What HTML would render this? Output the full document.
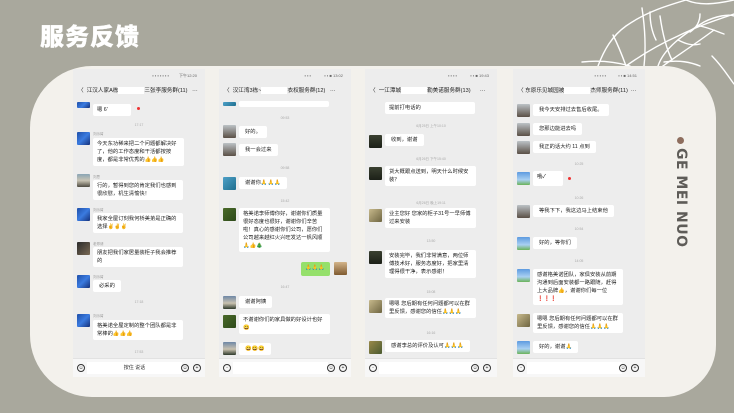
<!DOCTYPE html>
<html><head><meta charset="utf-8">
<style>
*{margin:0;padding:0;box-sizing:border-box}
body{width:734px;height:413px;overflow:hidden;background:#a9a89d;position:relative;font-family:"Liberation Sans","Noto Sans CJK SC",sans-serif}
.abs{position:absolute}
.card{position:absolute;left:30px;top:66px;width:686px;height:331px;background:#f3f1ec;border-radius:62px 52px 52px 62px}
.ph{position:absolute;top:69px;width:132px;height:308px;background:#ededed;overflow:hidden}
.sb{position:absolute;left:0;top:4px;width:100%;font-size:4px;color:#666;text-align:right;padding-right:8px}
.hd{position:absolute;left:0;top:17px;width:100%;font-size:5.6px;color:#222;padding-left:5px;white-space:nowrap}
.hd i{font-style:normal;display:inline-block;width:26px;height:7px;background:#fff;vertical-align:middle}
.bt{position:absolute;left:0;bottom:0;width:100%;height:19px;background:#f7f7f7;border-top:1px solid #e2e2e2}
.ic{position:absolute;top:5px;width:8px;height:8px;border:1px solid #333;border-radius:50%;font-size:5px;line-height:6px;text-align:center;color:#333}
.b{position:absolute;background:#fff;font-size:5.3px;line-height:8px;color:#222;padding:2px 4px;border-radius:2px}
.s{white-space:nowrap;width:auto!important;padding:2px 6px}
.g{background:#95e06b}
.a{position:absolute;width:13px;height:13px;border-radius:1px}
.t{position:absolute;left:0;width:100%;text-align:center;font-size:3.5px;color:#aaa}
.n{position:absolute;font-size:3.5px;color:#999}
.a1{background:linear-gradient(135deg,#1e4fa8,#3b7be0 50%,#15317a)}
.a2{background:linear-gradient(#8aa5b5,#c9c4b4 50%,#4d4a40)}
.a3{background:linear-gradient(135deg,#2b2b2b,#7a6a55)}
.a4{background:linear-gradient(135deg,#4a6a2a,#2d4a1a)}
.a5{background:linear-gradient(135deg,#4da0c8,#1f6f8f)}
.a6{background:linear-gradient(#bcc2c6,#5a5046)}
.a7{background:linear-gradient(#d3b48a,#7f5a2f)}
.a8{background:linear-gradient(#6e87a6,#c9c2b0 55%,#2f3a2c)}
.a9{background:linear-gradient(#5d9be0,#a9d0f2 60%,#6bb35a)}
.a10{background:linear-gradient(135deg,#c7b98c,#6e6541)}
.a11{background:linear-gradient(#3a4030,#1c2018)}
.a12{background:linear-gradient(135deg,#9a8a4a,#4a5a30)}
</style></head><body>

<div class="abs" style="left:40px;top:17px;font-size:24px;font-weight:900;color:#fff;letter-spacing:1px;font-family:'Noto Sans CJK SC',sans-serif;-webkit-text-stroke:0.3px #fff">服务反馈</div>

<svg class="abs" style="left:540px;top:0" width="194" height="110" viewBox="540 0 194 110" fill="none" stroke="#fff" stroke-width="1.4" stroke-linecap="round">
<path d="M598 66 C604 50 612 36 626 26 C646 12 666 6 686 0"/>
<path d="M626 66 C640 56 660 44 678 36 C698 26 716 20 734 14"/>
<path d="M658 66 C664 48 684 34 704 22 C716 16 728 14 734 16"/>
<path d="M655 72 C670 60 690 48 714 30"/>
<path d="M582 62 C600 60 616 62 630 66"/>
<path d="M613 35 C618 45 622 55 626 66"/>
<path d="M642 8 C645 28 646 48 644 66"/>
<path d="M650 12 C650 24 652 32 656 40"/>
<path d="M660 16 C662 30 666 48 672 60"/>
<path d="M664 62 C680 60 690 62 700 66"/>
<path d="M678 40 C686 44 692 46 700 44"/>
<path d="M690 32 C696 28 700 22 700 14"/>
<path d="M700 26 C710 28 718 32 724 34"/>
<path d="M712 56 C722 66 728 76 734 84"/>
<path d="M686 0 C700 6 716 4 734 0"/>
</svg>

<div class="card"></div>

<!-- Phone 1 -->
<div class="ph" style="left:73px">
<div class="sb">▪ ▪ ▪ ▪ ▪ ▪ ▪ &nbsp;&nbsp;&nbsp;&nbsp;&nbsp;&nbsp;&nbsp; 下午12:20</div>
<div class="hd">〈 &nbsp;江汉人家A栋<i></i>三张李服务群(11) &nbsp;&nbsp;···</div>
<div class="a a1" style="left:4px;top:33px;height:6px"></div>
<div class="b" style="left:20px;top:35px;width:38px">嗯 6'</div>
<div class="abs" style="left:64px;top:38px;width:3px;height:3px;border-radius:50%;background:#e33"></div>
<div class="t" style="top:54px">17:17</div>
<div class="a a1" style="left:4px;top:63px"></div><div class="n" style="left:20px;top:63px">刘示臂</div>
<div class="b" style="left:20px;top:69px;width:91px">今天东功稀来把二个问题都解决好了，他的工作态度和干活都按按度，都是非常优秀的👍👍👍</div>
<div class="a a2" style="left:4px;top:105px"></div><div class="n" style="left:20px;top:106px">刘思</div>
<div class="b" style="left:20px;top:111px;width:90px">行的，暂得到您的肯定我们也感到很欣慰，机生清愉快！</div>
<div class="a a1" style="left:4px;top:139px"></div><div class="n" style="left:20px;top:139px">刘示臂</div>
<div class="b" style="left:20px;top:144px;width:90px">我家全屋订刻我何桥美弟是正确的选择✌✌✌</div>
<div class="a a3" style="left:4px;top:173px"></div><div class="n" style="left:20px;top:173px">老郑请</div>
<div class="b" style="left:20px;top:178px;width:90px">朋友把我们家居量装柜子我会推荐的</div>
<div class="a a1" style="left:4px;top:206px"></div><div class="n" style="left:20px;top:206px">刘示臂</div>
<div class="b s" style="left:20px;top:211px">必采的</div>
<div class="t" style="top:231px">17:18</div>
<div class="a a1" style="left:4px;top:245px"></div><div class="n" style="left:20px;top:245px">刘示臂</div>
<div class="b" style="left:20px;top:251px;width:90px">格美诺全屋定制的整个团队都是非常棒的👍👍👍</div>
<div class="t" style="top:281px">17:53</div>
<div class="bt"><div class="ic" style="left:4px">☺</div><div class="abs" style="left:14px;top:3px;width:95px;height:12px;background:#fff;font-size:5px;line-height:12px;text-align:center;color:#333">按住 说话</div><div class="ic" style="left:108px">☺</div><div class="ic" style="left:120px">+</div></div>
</div>

<!-- Phone 2 -->
<div class="ph" style="left:219px">
<div class="sb">▪ ▪ ▪ &nbsp;&nbsp;&nbsp;&nbsp;&nbsp;&nbsp;&nbsp;&nbsp;&nbsp;&nbsp; ▪ ▪ ■ 13:02</div>
<div class="hd">〈 &nbsp;汉江湾3栋~<i></i>衣权服务群(12) &nbsp;&nbsp;···</div>
<div class="a a5" style="left:4px;top:33px;height:4px"></div>
<div class="b" style="left:20px;top:32px;width:90px;height:6px;padding:0"></div>
<div class="t" style="top:47px">09:53</div>
<div class="a a6" style="left:4px;top:56px"></div><div class="b s" style="left:20px;top:57px">好的。</div>
<div class="a a6" style="left:4px;top:74px"></div><div class="b s" style="left:20px;top:75px">我一会过来</div>
<div class="t" style="top:97px">09:58</div>
<div class="a a5" style="left:4px;top:108px"></div><div class="b s" style="left:20px;top:108px">谢谢你🙏🙏🙏</div>
<div class="t" style="top:130px">15:42</div>
<div class="a a4" style="left:4px;top:139px"></div>
<div class="b" style="left:20px;top:139px;width:91px">格美诺李师傅你好，谢谢你们质量很好态度也很好，谢谢你们辛苦啦！真心的感谢你们公司，愿你们公司越来越红火兴旺发达一帆风顺🙏👍🎄</div>
<div class="b g" style="left:82px;top:193px;width:29px;height:14px">🙏🙏🙏</div>
<div class="a a7" style="left:115px;top:193px"></div>
<div class="t" style="top:216px">16:47</div>
<div class="a a8" style="left:4px;top:227px"></div><div class="b s" style="left:20px;top:227px">谢谢阿姨</div>
<div class="a a4" style="left:4px;top:246px"></div><div class="b" style="left:20px;top:245px;width:91px">不谢谢你们的家具做的好设计也好😀</div>
<div class="a a8" style="left:4px;top:273px"></div><div class="b s" style="left:20px;top:274px">😀😀😀</div>
<div class="bt"><div class="ic" style="left:4px">◦</div><div class="abs" style="left:14px;top:3px;width:95px;height:12px;background:#fff"></div><div class="ic" style="left:108px">☺</div><div class="ic" style="left:120px">+</div></div>
</div>

<!-- Phone 3 -->
<div class="ph" style="left:365px">
<div class="sb">▪ ▪ ▪ ▪ &nbsp;&nbsp;&nbsp;&nbsp;&nbsp;&nbsp;&nbsp;&nbsp;&nbsp;&nbsp; ▪ ▪ ■ 19:43</div>
<div class="hd">〈 &nbsp;一江潭城<i></i>勒美诺服务群(13) &nbsp;&nbsp;&nbsp;&nbsp;&nbsp;···</div>
<div class="b" style="left:20px;top:33px;width:90px">提前打电话的</div>
<div class="t" style="top:55px">6月25日 上午10:10</div>
<div class="a a11" style="left:4px;top:66px"></div><div class="b s" style="left:20px;top:65px">收到，谢谢</div>
<div class="t" style="top:88px">6月26日 下午15:40</div>
<div class="a a11" style="left:4px;top:98px"></div><div class="b" style="left:20px;top:97px;width:91px">货大概跟点送到，明天什么时候安装？</div>
<div class="t" style="top:132px">6月26日 晚上19:11</div>
<div class="a a10" style="left:4px;top:140px"></div><div class="b" style="left:20px;top:139px;width:91px">业主您好 您家的柜子31号一早师傅过来安装</div>
<div class="t" style="top:170px">13:50</div>
<div class="a a11" style="left:4px;top:182px"></div><div class="b" style="left:20px;top:181px;width:91px">安装完毕，我们非常满意，两位师傅技术好，服务态度好，把家里清理得很干净，表示感谢！</div>
<div class="t" style="top:221px">15:08</div>
<div class="a a10" style="left:4px;top:231px"></div><div class="b" style="left:20px;top:229px;width:91px">嗯嗯 您后期有任何问题都可以在群里反馈，感谢您的信任🙏🙏🙏</div>
<div class="t" style="top:262px">16:16</div>
<div class="a a12" style="left:4px;top:272px"></div><div class="b s" style="left:20px;top:271px">感谢李总的评价及认可🙏🙏🙏</div>
<div class="bt"><div class="ic" style="left:4px">◦</div><div class="abs" style="left:14px;top:3px;width:95px;height:12px;background:#fff"></div><div class="ic" style="left:106px">☺</div><div class="ic" style="left:118px">+</div></div>
</div>

<!-- Phone 4 -->
<div class="ph" style="left:513px">
<div class="sb">▪ ▪ ▪ ▪ ▪ &nbsp;&nbsp;&nbsp;&nbsp;&nbsp;&nbsp;&nbsp;&nbsp;&nbsp; ▪ ▪ ■ 14:51</div>
<div class="hd">〈 东原乐见城园被<i></i>杰师服务群(11) &nbsp;···</div>
<div class="a a6" style="left:4px;top:35px"></div><div class="b s" style="left:20px;top:35px">我今天安排过去售后收尾。</div>
<div class="a a6" style="left:4px;top:54px"></div><div class="b s" style="left:20px;top:54px">您那边能进去吗</div>
<div class="a a6" style="left:4px;top:72px"></div><div class="b s" style="left:20px;top:72px">我正的话大约 11 点到</div>
<div class="t" style="top:93px">10:25</div>
<div class="a a9" style="left:4px;top:103px"></div><div class="b" style="left:20px;top:102px;width:30px;height:15px">哦✓</div>
<div class="abs" style="left:55px;top:108px;width:3px;height:3px;border-radius:50%;background:#e33"></div>
<div class="t" style="top:127px">10:26</div>
<div class="a a6" style="left:4px;top:136px"></div><div class="b s" style="left:20px;top:136px">等我下下，我这边马上结束他</div>
<div class="t" style="top:158px">10:54</div>
<div class="a a9" style="left:4px;top:168px"></div><div class="b s" style="left:20px;top:168px">好的，等你们</div>
<div class="t" style="top:190px">14:05</div>
<div class="a a9" style="left:4px;top:200px"></div><div class="b" style="left:20px;top:200px;width:90px">感谢格美诺团队，家俱安装从前期沟通到后面安装都一路跟随，赶得上大品牌👍，谢谢你们每一位❗❗❗</div>
<div class="a a10" style="left:4px;top:245px"></div><div class="b" style="left:20px;top:244px;width:90px">嗯嗯 您后期有任何问题都可以在群里反馈，感谢您的信任🙏🙏🙏</div>
<div class="a a9" style="left:4px;top:272px"></div><div class="b s" style="left:20px;top:272px">好的，谢谢🙏</div>
<div class="bt"><div class="ic" style="left:4px">◦</div><div class="abs" style="left:14px;top:3px;width:95px;height:12px;background:#fff"></div><div class="ic" style="left:106px">☺</div><div class="ic" style="left:118px">+</div></div>
</div>

<div class="abs" style="left:677px;top:137px;width:7px;height:7px;border-radius:50%;background:#8e6e5e"></div>
<div class="abs" style="left:680px;top:148px;transform-origin:0 0;font-size:14px;font-weight:bold;color:#5e5c58;white-space:nowrap;letter-spacing:0.5px;line-height:14px;font-family:'DejaVu Sans','Liberation Sans',sans-serif;transform:translate(8px,0) rotate(90deg)">GE MEI NUO</div>

</body></html>
